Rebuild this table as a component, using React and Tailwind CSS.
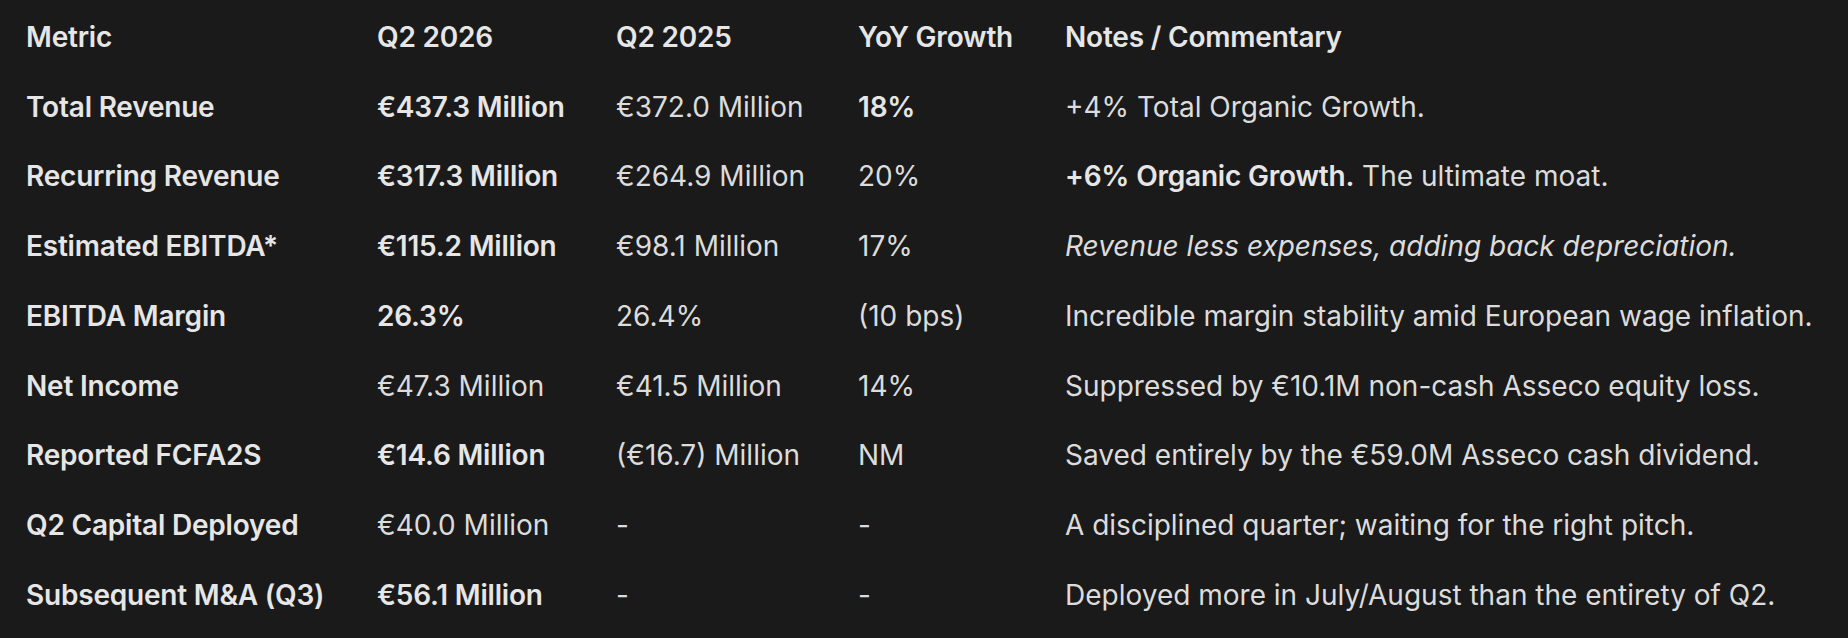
const ROWS = [
  { metric: 'Total Revenue', q26: '€437.3 Million', q26Bold: true, q25: '€372.0 Million', yoy: '18%', yoyBold: true, note: <>+4% Total Organic Growth.</> },
  { metric: 'Recurring Revenue', q26: '€317.3 Million', q26Bold: true, q25: '€264.9 Million', yoy: '20%', note: <><span className="font-semibold tracking-[-0.2px] text-[#e6e6e6]">+6% Organic Growth.</span> The ultimate moat.</> },
  { metric: 'Estimated EBITDA*', q26: '€115.2 Million', q26Bold: true, q25: '€98.1 Million', yoy: '17%', note: <em>Revenue less expenses, adding back depreciation.</em> },
  { metric: 'EBITDA Margin', q26: '26.3%', q26Bold: true, q25: '26.4%', yoy: '(10 bps)', note: <>Incredible margin stability amid European wage inflation.</> },
  { metric: 'Net Income', q26: '€47.3 Million', q25: '€41.5 Million', yoy: '14%', note: <>Suppressed by €10.1M non-cash Asseco equity loss.</> },
  { metric: 'Reported FCFA2S', q26: '€14.6 Million', q26Bold: true, q25: '(€16.7) Million', yoy: 'NM', note: <>Saved entirely by the €59.0M Asseco cash dividend.</> },
  { metric: 'Q2 Capital Deployed', q26: '€40.0 Million', q25: '-', yoy: '-', note: <>A disciplined quarter; waiting for the right pitch.</> },
  { metric: 'Subsequent M&A (Q3)', q26: '€56.1 Million', q26Bold: true, q25: '-', yoy: '-', note: <>Deployed more in July/August than the entirety of Q2.</> },
]

export default function App() {
  return (
    <div className="min-h-screen w-full pt-[2px] bg-[#1a1a1a] text-[#dcdcdc] text-[28px] leading-none" style={{ fontFamily: 'Inter, "Noto Sans", sans-serif' }}>
      <table className="table-fixed border-collapse text-left w-full">
        <thead>
          <tr className="h-[69.75px] font-semibold tracking-[-0.2px] text-[#e6e6e6]">
            <th className="w-[377px] pl-[26px] font-semibold">Metric</th>
            <th className="w-[239px] font-semibold">Q2 2026</th>
            <th className="w-[242px] font-semibold">Q2 2025</th>
            <th className="w-[207px] font-semibold">YoY Growth</th>
            <th className="font-semibold">Notes / Commentary</th>
          </tr>
        </thead>
        <tbody>
          {ROWS.map(r => (
            <tr key={r.metric} className="h-[69.75px]">
              <td className="pl-[26px] font-semibold tracking-[-0.2px] text-[#e6e6e6] whitespace-nowrap">{r.metric}</td>
              <td className={r.q26Bold ? 'font-semibold tracking-[-0.2px] text-[#e6e6e6] whitespace-nowrap' : 'whitespace-nowrap'}>{r.q26}</td>
              <td className="whitespace-nowrap">{r.q25}</td>
              <td className={r.yoyBold ? 'font-semibold tracking-[-0.2px] text-[#e6e6e6]' : ''}>{r.yoy}</td>
              <td className="whitespace-nowrap">{r.note}</td>
            </tr>
          ))}
        </tbody>
      </table>
    </div>
  )
}
